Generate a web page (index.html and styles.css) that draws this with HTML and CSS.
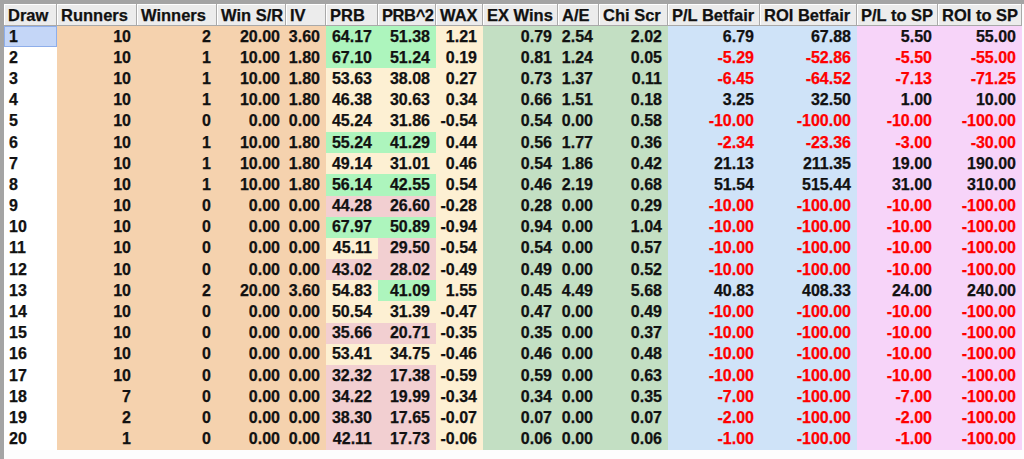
FILE: index.html
```html
<!DOCTYPE html>
<html>
<head>
<meta charset="utf-8">
<link rel="stylesheet" href="styles.css">
</head>
<body>
<div class="frame">
<table class="grid">
<colgroup>
<col class="w-draw"><col class="w-run"><col class="w-win"><col class="w-sr"><col class="w-iv"><col class="w-prb"><col class="w-prb2"><col class="w-wax"><col class="w-ex"><col class="w-ae"><col class="w-chi"><col class="w-plb"><col class="w-roib"><col class="w-plsp"><col class="w-roisp">
</colgroup>
<thead>
<tr class="head"><th>Draw</th><th>Runners</th><th>Winners</th><th>Win S/R</th><th>IV</th><th>PRB</th><th class="tight">PRB^2</th><th>WAX</th><th>EX Wins</th><th>A/E</th><th>Chi Scr</th><th>P/L Betfair</th><th>ROI Betfair</th><th>P/L to SP</th><th>ROI to SP</th></tr>
</thead>
<tbody>
<tr><td class="sel">1</td><td>10</td><td>2</td><td>20.00</td><td>3.60</td><td class="g">64.17</td><td class="g">51.38</td><td>1.21</td><td>0.79</td><td>2.54</td><td>2.02</td><td>6.79</td><td>67.88</td><td>5.50</td><td>55.00</td></tr>
<tr><td>2</td><td>10</td><td>1</td><td>10.00</td><td>1.80</td><td class="g">67.10</td><td class="g">51.24</td><td>0.19</td><td>0.81</td><td>1.24</td><td>0.05</td><td class="neg">-5.29</td><td class="neg">-52.86</td><td class="neg">-5.50</td><td class="neg">-55.00</td></tr>
<tr><td>3</td><td>10</td><td>1</td><td>10.00</td><td>1.80</td><td>53.63</td><td>38.08</td><td>0.27</td><td>0.73</td><td>1.37</td><td>0.11</td><td class="neg">-6.45</td><td class="neg">-64.52</td><td class="neg">-7.13</td><td class="neg">-71.25</td></tr>
<tr><td>4</td><td>10</td><td>1</td><td>10.00</td><td>1.80</td><td>46.38</td><td>30.63</td><td>0.34</td><td>0.66</td><td>1.51</td><td>0.18</td><td>3.25</td><td>32.50</td><td>1.00</td><td>10.00</td></tr>
<tr><td>5</td><td>10</td><td>0</td><td>0.00</td><td>0.00</td><td>45.24</td><td>31.86</td><td>-0.54</td><td>0.54</td><td>0.00</td><td>0.58</td><td class="neg">-10.00</td><td class="neg">-100.00</td><td class="neg">-10.00</td><td class="neg">-100.00</td></tr>
<tr><td>6</td><td>10</td><td>1</td><td>10.00</td><td>1.80</td><td class="g">55.24</td><td class="g">41.29</td><td>0.44</td><td>0.56</td><td>1.77</td><td>0.36</td><td class="neg">-2.34</td><td class="neg">-23.36</td><td class="neg">-3.00</td><td class="neg">-30.00</td></tr>
<tr><td>7</td><td>10</td><td>1</td><td>10.00</td><td>1.80</td><td>49.14</td><td>31.01</td><td>0.46</td><td>0.54</td><td>1.86</td><td>0.42</td><td>21.13</td><td>211.35</td><td>19.00</td><td>190.00</td></tr>
<tr><td>8</td><td>10</td><td>1</td><td>10.00</td><td>1.80</td><td class="g">56.14</td><td class="g">42.55</td><td>0.54</td><td>0.46</td><td>2.19</td><td>0.68</td><td>51.54</td><td>515.44</td><td>31.00</td><td>310.00</td></tr>
<tr><td>9</td><td>10</td><td>0</td><td>0.00</td><td>0.00</td><td class="p">44.28</td><td class="p">26.60</td><td>-0.28</td><td>0.28</td><td>0.00</td><td>0.29</td><td class="neg">-10.00</td><td class="neg">-100.00</td><td class="neg">-10.00</td><td class="neg">-100.00</td></tr>
<tr><td>10</td><td>10</td><td>0</td><td>0.00</td><td>0.00</td><td class="g">67.97</td><td class="g">50.89</td><td>-0.94</td><td>0.94</td><td>0.00</td><td>1.04</td><td class="neg">-10.00</td><td class="neg">-100.00</td><td class="neg">-10.00</td><td class="neg">-100.00</td></tr>
<tr><td>11</td><td>10</td><td>0</td><td>0.00</td><td>0.00</td><td>45.11</td><td class="p">29.50</td><td>-0.54</td><td>0.54</td><td>0.00</td><td>0.57</td><td class="neg">-10.00</td><td class="neg">-100.00</td><td class="neg">-10.00</td><td class="neg">-100.00</td></tr>
<tr><td>12</td><td>10</td><td>0</td><td>0.00</td><td>0.00</td><td class="p">43.02</td><td class="p">28.02</td><td>-0.49</td><td>0.49</td><td>0.00</td><td>0.52</td><td class="neg">-10.00</td><td class="neg">-100.00</td><td class="neg">-10.00</td><td class="neg">-100.00</td></tr>
<tr><td>13</td><td>10</td><td>2</td><td>20.00</td><td>3.60</td><td>54.83</td><td class="g">41.09</td><td>1.55</td><td>0.45</td><td>4.49</td><td>5.68</td><td>40.83</td><td>408.33</td><td>24.00</td><td>240.00</td></tr>
<tr><td>14</td><td>10</td><td>0</td><td>0.00</td><td>0.00</td><td>50.54</td><td>31.39</td><td>-0.47</td><td>0.47</td><td>0.00</td><td>0.49</td><td class="neg">-10.00</td><td class="neg">-100.00</td><td class="neg">-10.00</td><td class="neg">-100.00</td></tr>
<tr><td>15</td><td>10</td><td>0</td><td>0.00</td><td>0.00</td><td class="p">35.66</td><td class="p">20.71</td><td>-0.35</td><td>0.35</td><td>0.00</td><td>0.37</td><td class="neg">-10.00</td><td class="neg">-100.00</td><td class="neg">-10.00</td><td class="neg">-100.00</td></tr>
<tr><td>16</td><td>10</td><td>0</td><td>0.00</td><td>0.00</td><td>53.41</td><td>34.75</td><td>-0.46</td><td>0.46</td><td>0.00</td><td>0.48</td><td class="neg">-10.00</td><td class="neg">-100.00</td><td class="neg">-10.00</td><td class="neg">-100.00</td></tr>
<tr><td>17</td><td>10</td><td>0</td><td>0.00</td><td>0.00</td><td class="p">32.32</td><td class="p">17.38</td><td>-0.59</td><td>0.59</td><td>0.00</td><td>0.63</td><td class="neg">-10.00</td><td class="neg">-100.00</td><td class="neg">-10.00</td><td class="neg">-100.00</td></tr>
<tr><td>18</td><td>7</td><td>0</td><td>0.00</td><td>0.00</td><td class="p">34.22</td><td class="p">19.99</td><td>-0.34</td><td>0.34</td><td>0.00</td><td>0.35</td><td class="neg">-7.00</td><td class="neg">-100.00</td><td class="neg">-7.00</td><td class="neg">-100.00</td></tr>
<tr><td>19</td><td>2</td><td>0</td><td>0.00</td><td>0.00</td><td class="p">38.30</td><td class="p">17.65</td><td>-0.07</td><td>0.07</td><td>0.00</td><td>0.07</td><td class="neg">-2.00</td><td class="neg">-100.00</td><td class="neg">-2.00</td><td class="neg">-100.00</td></tr>
<tr><td>20</td><td>1</td><td>0</td><td>0.00</td><td>0.00</td><td class="p">42.11</td><td class="p">17.73</td><td>-0.06</td><td>0.06</td><td>0.00</td><td>0.06</td><td class="neg">-1.00</td><td class="neg">-100.00</td><td class="neg">-1.00</td><td class="neg">-100.00</td></tr>
</tbody>
</table>
</div>
</body>
</html>
```

FILE: styles.css
```css
html, body {
  margin: 0;
  padding: 0;
  background: #f7f7f7;
}
.frame {
  width: 1020px;
  height: 455px;
  border-top: 4px solid #a4a4a4;
  border-left: 4px solid #a4a4a4;
  background: #fdfdfd;
}
.grid {
  table-layout: fixed;
  width: 1018px;
  border-collapse: separate;
  border-spacing: 0;
  font-family: "Liberation Sans", Arial, sans-serif;
  font-weight: bold;
  color: #111;
  -webkit-text-stroke: 0.25px currentColor;
}
.w-draw { width: 53px; }
.w-run { width: 80px; }
.w-win { width: 80px; }
.w-sr { width: 69px; }
.w-iv { width: 40px; }
.w-prb { width: 52px; }
.w-prb2 { width: 58px; }
.w-wax { width: 47px; }
.w-ex { width: 75px; }
.w-ae { width: 41px; }
.w-chi { width: 69px; }
.w-plb { width: 92px; }
.w-roib { width: 97px; }
.w-plsp { width: 81px; }
.w-roisp { width: 84px; }

.head { height: 22px; }
.grid th {
  box-sizing: border-box;
  background: #ececec;
  border-right: 1px solid #a9a9a9;
  border-bottom: 1px solid #a9a9a9;
  box-shadow: inset 1px 1px 0 #ffffff;
  font-size: 16.5px;
  text-align: left;
  padding: 1px 0 0 4px;
  white-space: nowrap;
  overflow: hidden;
  line-height: 19px;
}
.grid th.tight { letter-spacing: -0.4px; }
.grid tbody tr { height: 21.2px; }
.grid td {
  font-size: 16px;
  line-height: 18px;
  padding: 0 6px 0 0;
  text-align: right;
  white-space: nowrap;
  overflow: hidden;
  background: #fdf0d3;
}
.grid td:nth-child(1) {
  background: #ffffff;
  text-align: left;
  padding: 0 0 0 5px;
}
.grid td:nth-child(2),
.grid td:nth-child(3),
.grid td:nth-child(4),
.grid td:nth-child(5) { background: #f5d2ae; }
.grid td:nth-child(9),
.grid td:nth-child(10),
.grid td:nth-child(11) { background: #c3dfc3; }
.grid td:nth-child(12),
.grid td:nth-child(13) { background: #cfe3f8; }
.grid td:nth-child(14),
.grid td:nth-child(15) { background: #f7d4f9; }
.grid td.g { background: #adf5bd; }
.grid td.p { background: #f2cfd1; }
.grid td.sel {
  background: #c4d6f7;
  box-shadow: inset 0 0 0 1px #8eaeea;
}
.grid td.neg { color: #ff0000; }
```
